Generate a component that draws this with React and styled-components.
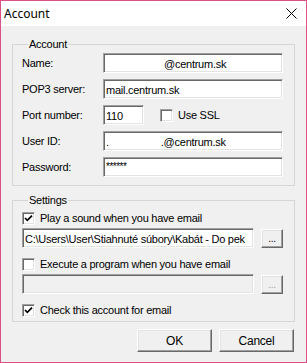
import React from "react";
import styled, { createGlobalStyle } from "styled-components";

const GlobalStyle = createGlobalStyle`
  html, body {
    margin: 0;
    padding: 0;
    background: #f0f0f0;
  }
  * {
    box-sizing: border-box;
  }
`;

const Window = styled.div`
  width: 307px;
  height: 363px;
  border: 1px solid #dd5187;
  background: #f0f0f0;
  display: flex;
  flex-direction: column;
  font-family: "Liberation Sans", Arial, sans-serif;
  font-size: 11px;
  letter-spacing: -0.25px;
  color: #000;
`;

const TitleBar = styled.div`
  height: 25px;
  background: #fff;
  display: flex;
  align-items: center;
  justify-content: space-between;
  padding: 0 9px 0 3px;
  font-family: "Noto Sans", "Liberation Sans", sans-serif;
  font-size: 12px;
  letter-spacing: 0;
  flex-shrink: 0;
`;

const Body = styled.div`
  flex: 1;
  display: flex;
  flex-direction: column;
  padding: 11px 11px 0 11px;
`;

const Group = styled.fieldset`
  margin: ${(p) => p.$top || 0}px 0 0 0;
  padding: ${(p) => p.$padTop || 0}px 11px ${(p) => p.$padBottom || 0}px 9px;
  border: 1px solid #d5d5d5;
  border-radius: 0;
  display: flex;
  flex-direction: column;
  gap: ${(p) => p.$gap || 0}px;
  min-width: 0;
`;

const Legend = styled.legend`
  padding: 0 1px;
  margin-left: 6px;
  line-height: 14px;
  height: 14px;
`;

const FieldRow = styled.div`
  display: flex;
  align-items: center;
  height: 20px;
`;

const Label = styled.span`
  width: 81px;
  flex-shrink: 0;
`;

const Input = styled.div`
  height: ${(p) => p.$h || 20}px;
  width: ${(p) => (p.$w ? `${p.$w}px` : "auto")};
  flex: ${(p) => (p.$w ? "none" : "1 1 0")};
  min-width: 0;
  background: ${(p) => (p.$disabled ? "#f0f0f0" : "#fff")};
  border-top: 1px solid #a0a0a0;
  border-left: 1px solid #a0a0a0;
  border-right: 1px solid #fff;
  border-bottom: 1px solid #fff;
  box-shadow: inset 1px 1px 0 #696969, inset -1px -1px 0 #e3e3e3;
  padding: 1px 2px 0 2px;
  display: flex;
  align-items: center;
  white-space: nowrap;
  overflow: hidden;
`;

const Hidden = styled.span`
  display: inline-block;
  width: ${(p) => p.$w}px;
  flex-shrink: 0;
`;

const Stars = styled.span`
  font-size: 10px;
  letter-spacing: -0.5px;
  margin-top: -2px;
`;

const CheckRow = styled.label`
  display: flex;
  align-items: center;
  gap: 5px;
  height: 16px;
  margin-left: ${(p) => p.$indent || 0}px;
`;

const Box = styled.span`
  width: 13px;
  height: 13px;
  flex-shrink: 0;
  background: #fff;
  border-top: 1px solid #a0a0a0;
  border-left: 1px solid #a0a0a0;
  border-right: 1px solid #fff;
  border-bottom: 1px solid #fff;
  box-shadow: inset 1px 1px 0 #696969, inset -1px -1px 0 #e3e3e3;
  display: flex;
  align-items: center;
  justify-content: center;
`;

const PathRow = styled.div`
  display: flex;
  align-items: center;
  gap: 7px;
  height: 20px;
`;

const Button = styled.div`
  width: ${(p) => p.$w}px;
  height: ${(p) => p.$h}px;
  flex-shrink: 0;
  background: #f0f0f0;
  border-top: 1px solid #fff;
  border-left: 1px solid #fff;
  border-right: 1px solid #696969;
  border-bottom: 1px solid #696969;
  box-shadow: inset -1px -1px 0 #a0a0a0, inset 1px 1px 0 #e3e3e3;
  display: flex;
  align-items: center;
  justify-content: center;
  color: ${(p) => (p.$disabled ? "#a0a0a0" : "#000")};
  font-size: ${(p) => (p.$small ? 10 : 12)}px;
`;

const Footer = styled.div`
  display: flex;
  justify-content: flex-end;
  gap: 7px;
  padding: 7px 1px 0 0;
`;

const Check = () => (
  <svg width="9" height="9" viewBox="0 0 9 9">
    <path d="M1 4 L3.3 6.4 L8 1.6" fill="none" stroke="#000" strokeWidth="1.7" />
  </svg>
);

const Close = () => (
  <svg width="11" height="11" viewBox="0 0 11 11">
    <path d="M0.5 0.5 L10.5 10.5 M10.5 0.5 L0.5 10.5" stroke="#000" strokeWidth="1" />
  </svg>
);

const App = () => (
  <>
    <GlobalStyle />
    <Window>
      <TitleBar>
        <span>Account</span>
        <Close />
      </TitleBar>
      <Body>
        <Group $padTop={2} $padBottom={8} $gap={6}>
          <Legend>Account</Legend>
          <FieldRow>
            <Label>Name:</Label>
            <Input>
              <Hidden $w={58} />
              @centrum.sk
            </Input>
          </FieldRow>
          <FieldRow>
            <Label>POP3 server:</Label>
            <Input>mail.centrum.sk</Input>
          </FieldRow>
          <FieldRow>
            <Label>Port number:</Label>
            <Input $w={41}>110</Input>
            <CheckRow $indent={16}>
              <Box />
              Use SSL
            </CheckRow>
          </FieldRow>
          <FieldRow>
            <Label>User ID:</Label>
            <Input>
              <span>.</span>
              <Hidden $w={52} />
              .@centrum.sk
            </Input>
          </FieldRow>
          <FieldRow>
            <Label>Password:</Label>
            <Input>
              <Stars>******</Stars>
            </Input>
          </FieldRow>
        </Group>
        <Group $top={7} $padTop={3} $padBottom={3} $gap={2}>
          <Legend>Settings</Legend>
          <CheckRow>
            <Box>
              <Check />
            </Box>
            Play a sound when you have email
          </CheckRow>
          <PathRow>
            <Input>C:\Users\User\Stiahnuté súbory\Kabát - Do pek</Input>
            <Button $w={22} $h={19} $small>
              ...
            </Button>
          </PathRow>
          <CheckRow style={{ marginTop: 6 }}>
            <Box />
            Execute a program when you have email
          </CheckRow>
          <PathRow>
            <Input $disabled />
            <Button $w={22} $h={19} $small $disabled>
              ...
            </Button>
          </PathRow>
          <CheckRow style={{ marginTop: 6 }}>
            <Box>
              <Check />
            </Box>
            Check this account for email
          </CheckRow>
        </Group>
        <Footer>
          <Button $w={75} $h={23}>OK</Button>
          <Button $w={75} $h={23}>Cancel</Button>
        </Footer>
      </Body>
    </Window>
  </>
);

export default App;
